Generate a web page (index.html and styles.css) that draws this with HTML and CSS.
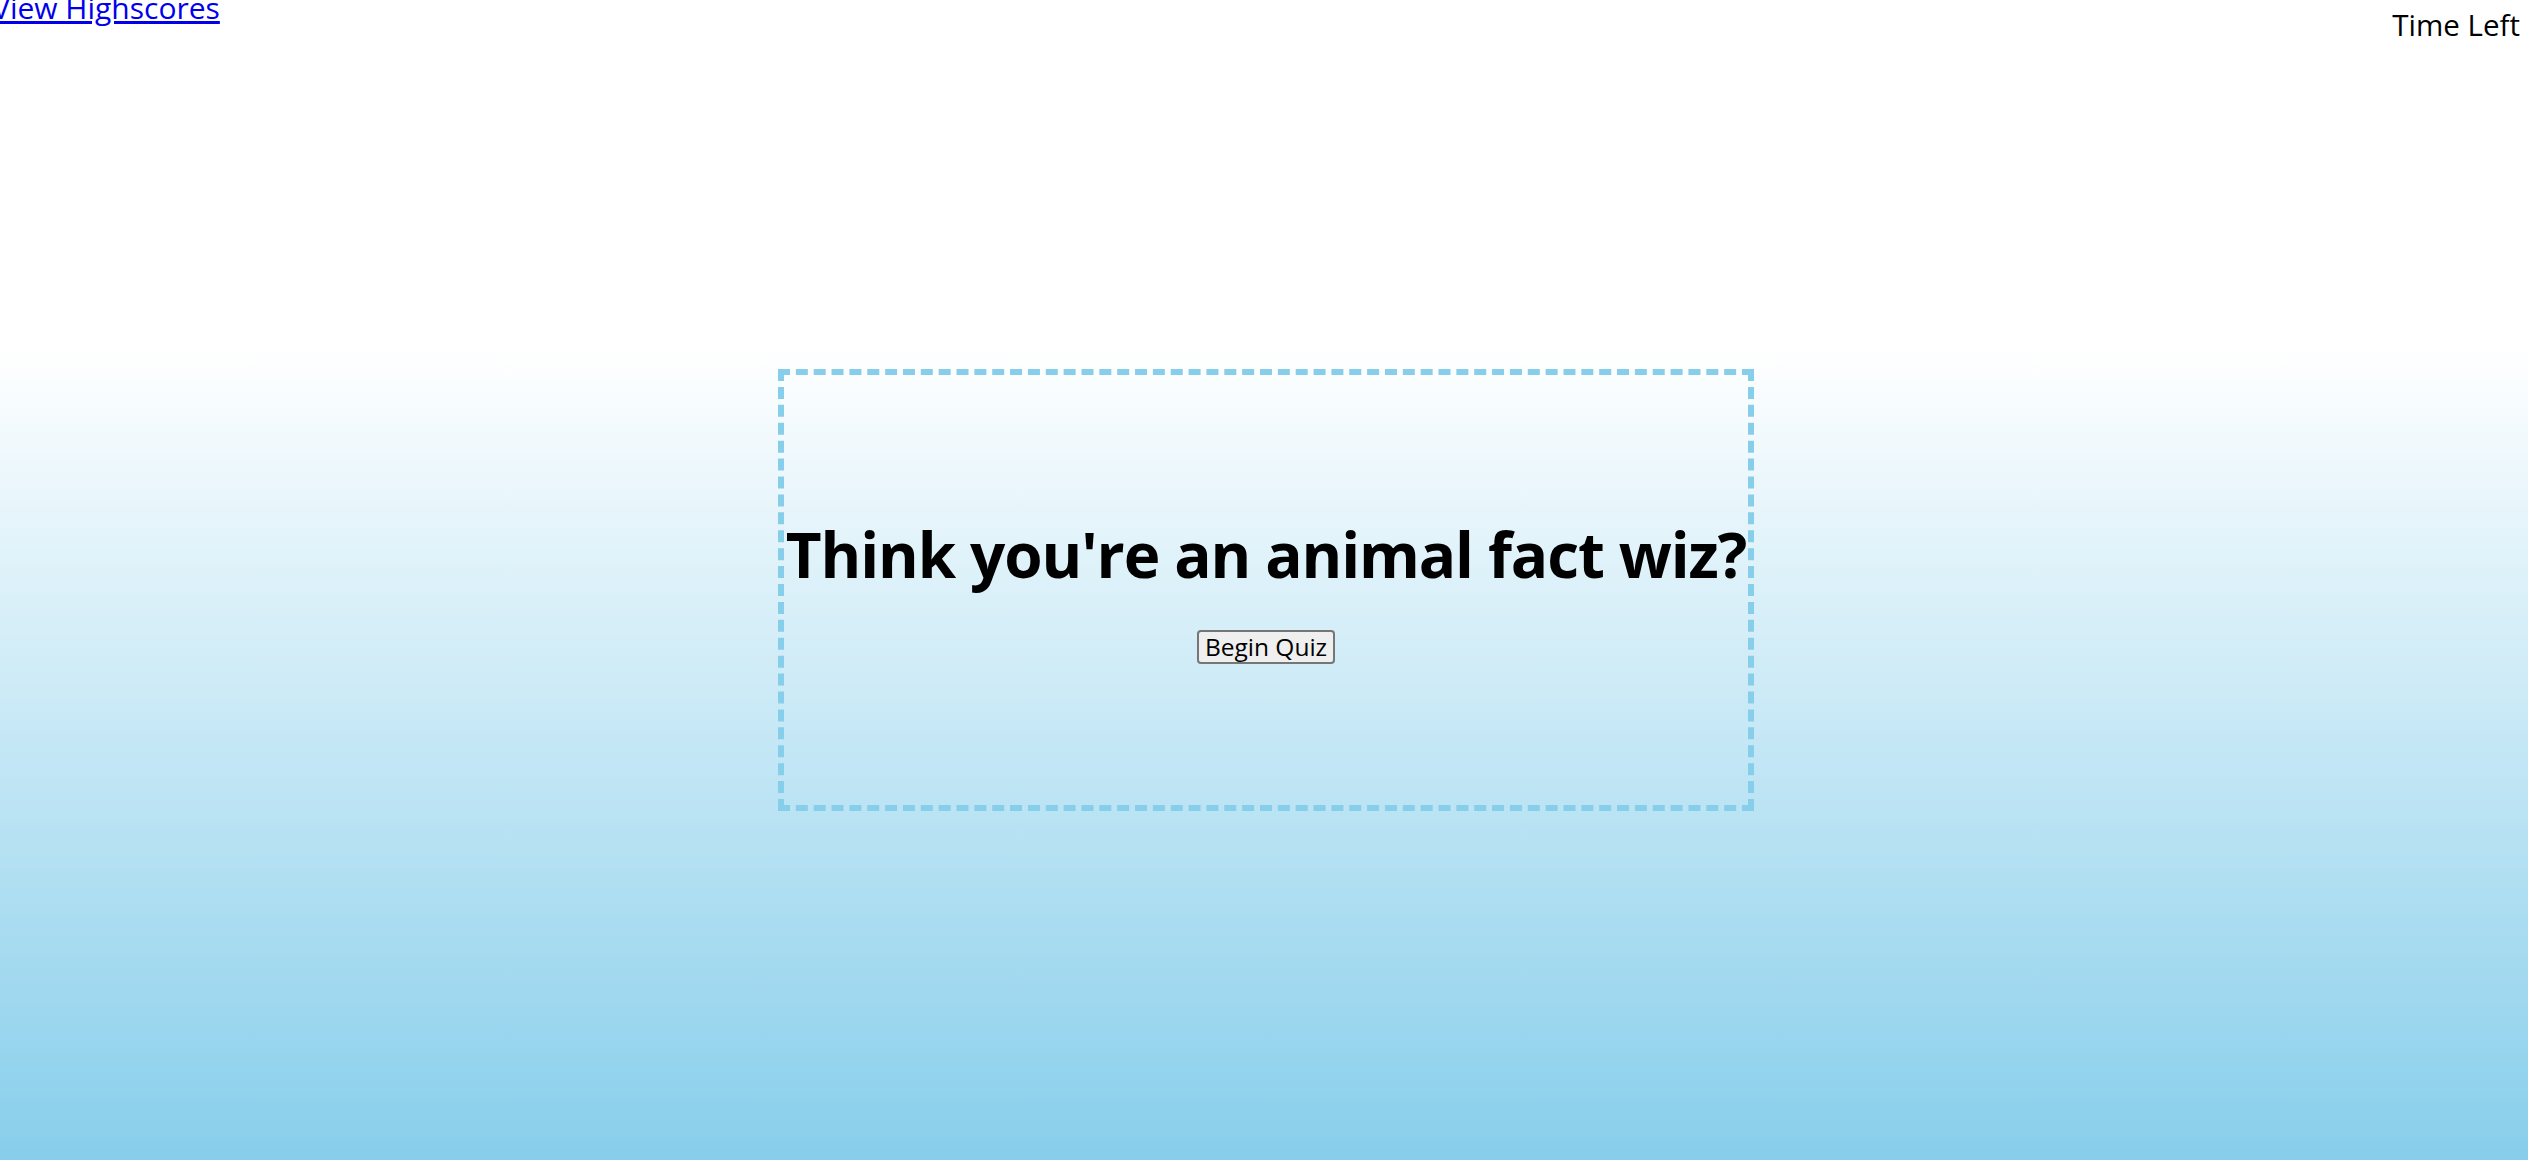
FILE: index.html
```html
<!DOCTYPE html>
<html lang="en">
<head>
<meta charset="utf-8">
<title>Animal Quiz</title>
<link rel="stylesheet" href="styles.css">
</head>
<body>
<header class="topbar">
  <a class="highscores" href="#">View Highscores</a>
  <div class="timer">Time Left</div>
</header>
<main class="stage">
  <section class="quiz-box">
    <h1 class="title">Think you're an animal fact wiz?</h1>
    <button class="start-btn" type="button">Begin Quiz</button>
  </section>
</main>
</body>
</html>
```

FILE: styles.css
```css
html, body {
  margin: 0;
  padding: 0;
}

body {
  min-height: 1160px;
  font-family: "Open Sans", "Noto Sans", sans-serif;
  font-size: 26px;
  background: linear-gradient(to bottom, #ffffff 0%, #ffffff 30%, #87ceeb 100%);
  overflow: hidden;
}

.topbar {
  display: flex;
  justify-content: space-between;
  align-items: flex-start;
  height: 60px;
}

.highscores {
  color: #0000ee;
  text-decoration: underline;
  font-size: 30px;
  margin: -9px 0 0 -8px;
  line-height: 1.15;
}

.timer {
  color: #000;
  font-size: 29.5px;
  margin: 8px 8px 0 0;
  line-height: 1.15;
}

.stage {
  display: flex;
  justify-content: center;
  padding-top: 309px;
}

.quiz-box {
  box-sizing: border-box;
  width: 976px;
  height: 442px;
  border: 6px dashed #87ceeb;
  display: flex;
  flex-direction: column;
  align-items: center;
  justify-content: center;
  gap: 39px;
  margin-left: 4px;
}

.title {
  margin: 0;
  font-size: 62px;
  font-weight: 700;
  line-height: 74px;
  letter-spacing: -1.1px;
  white-space: nowrap;
  color: #000;
}

.start-btn {
  font-family: inherit;
  font-size: 24.5px;
  line-height: 28px;
  padding: 1px 6px;
  height: 34px;
  color: #000;
  background: #efefef;
  border: 2px solid #767676;
  border-radius: 4px;
}
```
